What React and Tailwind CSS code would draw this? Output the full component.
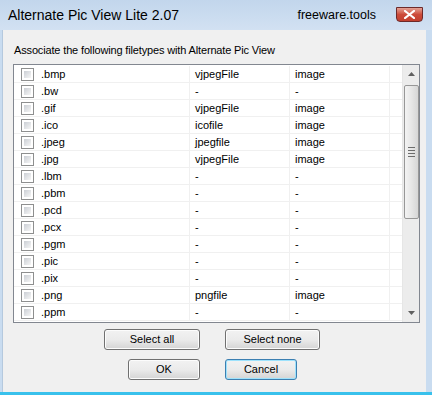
import React from "react";

const rows = [
  [".bmp", "vjpegFile", "image"],
  [".bw", "-", "-"],
  [".gif", "vjpegFile", "image"],
  [".ico", "icofile", "image"],
  [".jpeg", "jpegfile", "image"],
  [".jpg", "vjpegFile", "image"],
  [".lbm", "-", "-"],
  [".pbm", "-", "-"],
  [".pcd", "-", "-"],
  [".pcx", "-", "-"],
  [".pgm", "-", "-"],
  [".pic", "-", "-"],
  [".pix", "-", "-"],
  [".png", "pngfile", "image"],
  [".ppm", "-", "-"],
];

const Checkbox = () => (
  <div className="w-[13px] h-[13px] border border-[#8e8f8f] bg-white p-[2px] shrink-0">
    <div className="w-full h-full bg-gradient-to-br from-[#cbcfd5] to-[#f6f6f6]" />
  </div>
);

const Button = ({ label, width, focused }) => (
  <div
    className={
      "h-[21px] rounded-[3px] border flex items-center justify-center bg-gradient-to-b from-[#f2f2f2] via-[#ebebeb] to-[#d4d4d4] " +
      (focused ? "border-[#3c7fb1] shadow-[inset_0_0_0_1px_#9ee2fc]" : "border-[#707070] shadow-[inset_0_0_0_1px_#fcfcfc]")
    }
    style={{ width }}
  >
    <span className="text-[11px] text-black">{label}</span>
  </div>
);

const App = () => {
  return (
    <div className="w-[432px] h-[395px] bg-[#c9dcf0] flex flex-col font-['Liberation_Sans',Arial,sans-serif] overflow-hidden border-b-[3px] border-[#39c1ec]">
      {/* title bar */}
      <div className="h-[30px] flex items-center pl-[8px] pr-[9px] bg-gradient-to-b from-[#c2d6ec] to-[#d2e1f2] shrink-0">
        <span className="text-[14px] text-black">Alternate Pic View Lite 2.07</span>
        <span className="ml-auto mr-[20px] text-[12.5px] text-black">freeware.tools</span>
        <div className="w-[27px] h-[15px] mb-[2px] rounded-b-[4px] border border-[#6d2a2a] bg-gradient-to-b from-[#e3a195] via-[#cc4b3a] to-[#c2402f] flex items-center justify-center">
          <svg width="11" height="9" viewBox="0 0 11 9">
            <path d="M1 1 L10 8 M10 1 L1 8" stroke="#fff" strokeWidth="2.2" strokeLinecap="square" />
          </svg>
        </div>
      </div>

      {/* client area */}
      <div className="flex-1 ml-[2px] mr-[6px] bg-[#f0f0f0] border-l border-[#b5c9de] flex flex-col pl-[10px] pr-[4px]">
        <div className="text-[11px] tracking-[-0.15px] text-black pt-[12px] pl-[1px] h-[34px]">
          Associate the following filetypes with Alternate Pic View
        </div>

        <div className="w-[407px] h-[259px] border border-[#828790] bg-white flex">
          <div className="flex-1 flex flex-col pt-[1px]">
            {rows.map(([ext, type, kind]) => (
              <div key={ext} className="h-[17px] flex border-b border-[#f0f0f0] text-[11px] text-black">
                <div className="w-[176px] flex items-center pl-[7px] gap-[7px] border-r border-[#f0f0f0]">
                  <Checkbox />
                  <span>{ext}</span>
                </div>
                <div className="w-[100px] flex items-center pl-[5px] border-r border-[#f0f0f0]">{type}</div>
                <div className="w-[100px] flex items-center pl-[5px] border-r border-[#f0f0f0]">{kind}</div>
                <div className="flex-1" />
              </div>
            ))}
          </div>
          {/* scrollbar */}
          <div className="w-[17px] bg-[#ececec] flex flex-col items-center border-l border-[#e6e6e6]">
            <div className="h-[18px] w-full flex items-center justify-center">
              <svg width="7" height="4" viewBox="0 0 7 4">
                <path d="M0 4 L3.5 0 L7 4 Z" fill="#606060" />
              </svg>
            </div>
            <div className="mt-[2px] w-[15px] h-[134px] rounded-[2px] border border-[#979797] bg-gradient-to-r from-[#f3f3f3] via-[#e6e6e6] to-[#d6d6d6] flex flex-col items-center justify-center gap-[2px]">
              <div className="w-[7px] h-[1px] bg-[#6c6c6c]" />
              <div className="w-[7px] h-[1px] bg-[#6c6c6c]" />
              <div className="w-[7px] h-[1px] bg-[#6c6c6c]" />
              <div className="w-[7px] h-[1px] bg-[#6c6c6c]" />
            </div>
            <div className="flex-1" />
            <div className="h-[18px] w-full flex items-center justify-center">
              <svg width="7" height="4" viewBox="0 0 7 4">
                <path d="M0 0 L7 0 L3.5 4 Z" fill="#606060" />
              </svg>
            </div>
          </div>
        </div>

        <div className="flex gap-[25px] pl-[91px] mt-[6px]">
          <Button label="Select all" width="96px" />
          <Button label="Select none" width="95px" />
        </div>
        <div className="flex gap-[25px] pl-[115px] mt-[9px]">
          <Button label="OK" width="72px" />
          <Button label="Cancel" width="72px" focused />
        </div>
      </div>
    </div>
  );
};

export default App;
